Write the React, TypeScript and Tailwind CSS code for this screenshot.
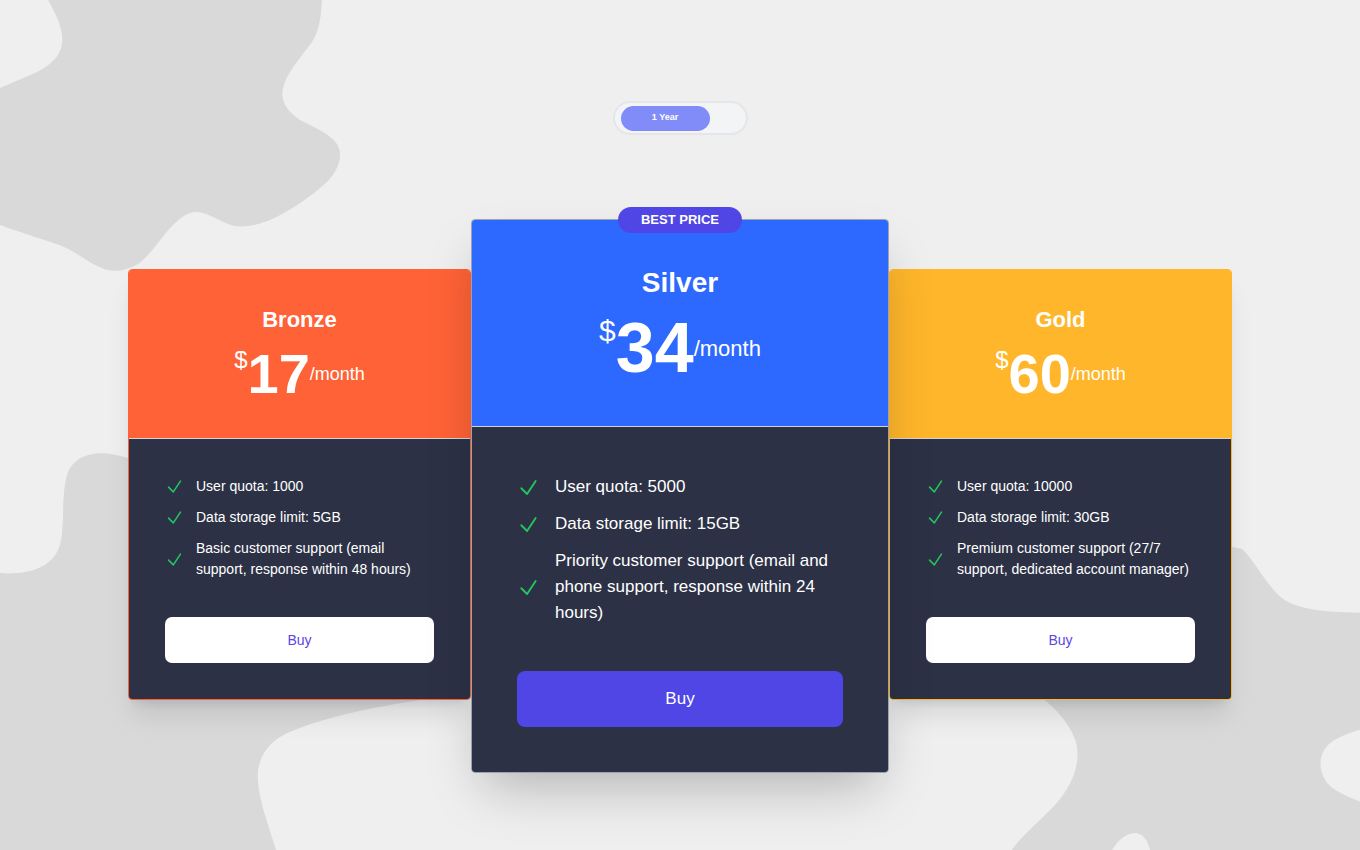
import React from "react";

type Plan = {
  name: string;
  price: string;
  headerClass: string;
  borderClass: string;
  features: string[];
  featured?: boolean;
};

const plans: Plan[] = [
  {
    name: "Bronze",
    price: "17",
    headerClass: "bg-[#ff6236]",
    borderClass: "border-[#ff6236]",
    features: [
      "User quota: 1000",
      "Data storage limit: 5GB",
      "Basic customer support (email support, response within 48 hours)",
    ],
  },
  {
    name: "Silver",
    price: "34",
    headerClass: "bg-[#2e69ff]",
    borderClass: "border-[#9ca3af]",
    featured: true,
    features: [
      "User quota: 5000",
      "Data storage limit: 15GB",
      "Priority customer support (email and phone support, response within 24 hours)",
    ],
  },
  {
    name: "Gold",
    price: "60",
    headerClass: "bg-[#ffb62a]",
    borderClass: "border-[#ffb62a]",
    features: [
      "User quota: 10000",
      "Data storage limit: 30GB",
      "Premium customer support (27/7 support, dedicated account manager)",
    ],
  },
];

const CheckIcon = ({ className }: { className: string }) => (
  <svg
    className={className}
    viewBox="0 0 24 24"
    fill="none"
    stroke="#22c55e"
    strokeWidth={2}
    strokeLinecap="round"
    strokeLinejoin="round"
  >
    <path d="m4.5 12.75 6 6 9-13.5" />
  </svg>
);

// decorative blobs behind the cards
const Backdrop = () => (
  <svg
    className="absolute left-0 top-0 h-[850px] w-[1360px]"
    viewBox="0 0 1360 850"
    fill="#d9d9d9"
  >
    <path d="M48 0 C56 14 64 30 62 44 C60 58 48 68 28 76 L0 88 L0 225 C22 233 45 240 62 246 C78 253 90 264 104 269 C112 272 124 272 138 264 C152 254 160 238 172 226 C180 218 188 212 196 212 C206 212 216 219 228 224 C240 229 256 226 272 219 C290 211 312 196 328 181 C338 170 344 156 337 144 C330 134 316 128 300 120 C288 112 280 102 283 88 C286 74 300 58 312 42 C320 30 321 14 322 0 Z" />
    <path d="M0 573 C24 575 50 570 59 548 C66 528 60 495 68 472 C76 454 98 448 128 458 L420 560 L420 700 C380 706 330 716 300 728 C276 736 262 748 258 770 C256 792 266 818 276 850 L0 850 Z" />
    <path d="M1400 612 C1340 614 1300 612 1282 598 C1266 585 1256 562 1242 549 L1200 540 L1032 690 C1048 702 1068 718 1076 742 C1082 766 1070 792 1046 814 C1032 828 1018 840 1012 850 L1112 850 C1118 840 1126 833 1136 833 C1144 834 1148 842 1150 850 L1400 850 Z" />
    <path
      fill="#efefef"
      d="M1400 722 C1368 726 1340 734 1328 745 C1318 755 1318 772 1328 784 C1340 796 1370 806 1400 814 Z"
    />
  </svg>
);

const PlanCard = ({ plan }: { plan: Plan }) => {
  const big = plan.featured;
  return (
    <div
      className={
        big
          ? `relative z-10 flex w-[418px] flex-col rounded-[4px] border ${plan.borderClass} shadow-2xl`
          : `relative mt-[50px] flex w-[343px] flex-col rounded-[4px] border ${plan.borderClass} shadow-xl`
      }
    >
      {big && (
        <div className="absolute left-1/2 top-[-13px] flex h-[26px] w-[124px] -translate-x-1/2 items-center justify-center rounded-full bg-[#4f46e5] text-[13px] font-bold uppercase text-white">
          Best price
        </div>
      )}
      <div
        className={
          big
            ? `flex flex-col items-center rounded-t-[3px] border-b border-[#d4d4d8] ${plan.headerClass} pt-[45px] pb-[43px] text-white`
            : `flex flex-col items-center rounded-t-[3px] border-b border-[#d4d4d8] ${plan.headerClass} pt-[36px] pb-[36px] text-white`
        }
      >
        <h2
          className={
            big
              ? "text-[28px] font-bold leading-[35px]"
              : "text-[22px] font-bold leading-[28px]"
          }
        >
          {plan.name}
        </h2>
        <div
          className={
            big
              ? "mt-[13px] flex h-[70px] items-center"
              : "mt-[12px] flex h-[56px] items-center"
          }
        >
          <span
            className={
              big
                ? "mt-[3px] self-start text-[30px] leading-none"
                : "mt-[2px] self-start text-[24px] leading-none"
            }
          >
            $
          </span>
          <span
            className={
              big
                ? "text-[70px] font-bold leading-none"
                : "text-[56px] font-bold leading-none"
            }
          >
            {plan.price}
          </span>
          <span className={big ? "text-[22px]" : "text-[18px]"}>/month</span>
        </div>
      </div>
      <div
        className={
          big
            ? "flex flex-1 flex-col rounded-b-[3px] bg-[#2c3145] px-[45px] pt-[47px] pb-[45px]"
            : "flex flex-1 flex-col rounded-b-[3px] bg-[#2c3145] px-[36px] pt-[37px] pb-[36px]"
        }
      >
        <ul className={big ? "flex flex-col gap-[11px]" : "flex flex-col gap-[10px]"}>
          {plan.features.map((f) => (
            <li
              key={f}
              className={big ? "flex items-center gap-[15px]" : "flex items-center gap-[12px]"}
            >
              <CheckIcon
                className={big ? "h-[23px] w-[23px] shrink-0" : "h-[19px] w-[19px] shrink-0"}
              />
              <span
                className={
                  big
                    ? "text-[17px] leading-[26px] text-white"
                    : "text-[14px] leading-[21px] text-white"
                }
              >
                {f}
              </span>
            </li>
          ))}
        </ul>
        <button
          type="button"
          className={
            big
              ? "mt-[45px] h-[56px] w-full rounded-[8px] bg-[#4f46e5] text-[17px] text-white"
              : "mt-[37px] h-[46px] w-full rounded-[7px] bg-white text-[14px] text-[#5b46e5]"
          }
        >
          Buy
        </button>
      </div>
    </div>
  );
};

export default function App() {
  return (
    <div className="relative h-[850px] w-full overflow-hidden bg-[#efefef] font-['Liberation_Sans',Arial,sans-serif]">
      <Backdrop />
      <div className="relative flex w-full flex-col items-center pt-[101px]">
        <div className="flex h-[34px] w-[135px] items-center rounded-full border-2 border-[#e4e6ea] bg-[#f3f4f6] px-[6px]">
          <div className="flex h-[25px] w-[89px] items-center justify-center rounded-full bg-[#818cf8] text-[9px] font-bold text-white">
            1 Year
          </div>
        </div>
        <div className="mt-[84px] flex items-start">
          {plans.map((p) => (
            <PlanCard key={p.name} plan={p} />
          ))}
        </div>
      </div>
    </div>
  );
}
